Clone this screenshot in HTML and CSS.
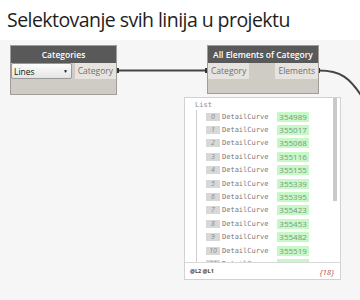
FILE: index.html
```html
<!DOCTYPE html>
<html lang="en">
<head>
    <meta charset="UTF-8">
    <meta name="viewport" content="width=device-width, initial-scale=1.0">
    <title>Selektovanje svih linija</title>

    <link rel="stylesheet" href="styles.css">
</head>
<body>
    <div class="canvas">
        <h1 class="title">Selektovanje svih linija u projektu</h1>

        <svg class="wires" width="360" height="300" viewBox="0 0 360 300">
            <path d="M118 70.5 L206 70.5" stroke="#444" stroke-width="2" fill="none"/>
            <path d="M319 70.5 C340 70.5 350 77 364 100" stroke="#444" stroke-width="2" fill="none"/>
            <rect x="116" y="68" width="3" height="5" fill="#333"/>
            <rect x="205" y="68" width="3" height="5" fill="#333"/>
            <rect x="317" y="68" width="3" height="5" fill="#333"/>
        </svg>

        <div class="node node-categories">
            <div class="node-head">Categories</div>
            <div class="node-row">
                <div class="dropdown">
                    <span>Lines</span>
                    <span class="arrow">&#9660;</span>
                </div>
                <div class="port">Category</div>
            </div>
            <div class="node-foot"></div>
        </div>

        <div class="node node-elements">
            <div class="node-head">All Elements of Category</div>
            <div class="node-row">
                <div class="port">Category</div>
                <div class="port">Elements</div>
            </div>
            <div class="node-foot"></div>
        </div>

        <div class="watch">
            <div class="watch-body">
                <div class="list-label">List</div>
                <div class="tree">
                    <div class="item"><span class="idx">0</span><span class="type">DetailCurve</span><span class="val">354989</span></div>
                    <div class="item"><span class="idx">1</span><span class="type">DetailCurve</span><span class="val">355017</span></div>
                    <div class="item"><span class="idx">2</span><span class="type">DetailCurve</span><span class="val">355068</span></div>
                    <div class="item"><span class="idx">3</span><span class="type">DetailCurve</span><span class="val">355116</span></div>
                    <div class="item"><span class="idx">4</span><span class="type">DetailCurve</span><span class="val">355155</span></div>
                    <div class="item"><span class="idx">5</span><span class="type">DetailCurve</span><span class="val">355339</span></div>
                    <div class="item"><span class="idx">6</span><span class="type">DetailCurve</span><span class="val">355395</span></div>
                    <div class="item"><span class="idx">7</span><span class="type">DetailCurve</span><span class="val">355423</span></div>
                    <div class="item"><span class="idx">8</span><span class="type">DetailCurve</span><span class="val">355453</span></div>
                    <div class="item"><span class="idx">9</span><span class="type">DetailCurve</span><span class="val">355482</span></div>
                    <div class="item"><span class="idx">10</span><span class="type">DetailCurve</span><span class="val">355519</span></div>
                    <div class="item"><span class="idx">11</span><span class="type">DetailCurve</span><span class="val">355540</span></div>
                </div>
                <div class="scrollbar"></div>
            </div>
            <div class="watch-foot">
                <span class="levels">@L2 @L1</span>
                <span class="count">{18}</span>
            </div>
        </div>
    </div>
</body>
</html>
```

FILE: styles.css
```css
*{
    box-sizing: border-box;
}
body{
    margin: 0;
    background-color: #f6f6f6;
    font-family: "Open Sans", "Noto Sans", sans-serif;
}
.canvas{
    position: relative;
    width: 360px;
    height: 300px;
    overflow: hidden;
}
.title{
    margin: 0;
    padding: 6px 0 0 7px;
    height: 40px;
    background-color: #fff;
    font-size: 19.5px;
    font-weight: 400;
    color: #1e1e1e;
    line-height: 28px;
    letter-spacing: -0.55px;
    white-space: nowrap;
}
.wires{
    position: absolute;
    left: 0;
    top: 0;
}

/* nodes */
.node{
    position: absolute;
    top: 45px;
    display: flex;
    flex-direction: column;
    background-color: #cfcbc5;
    border: 1px solid #a09c97;
}
.node-categories{
    left: 10px;
    width: 107px;
    height: 50px;
}
.node-elements{
    left: 207px;
    width: 112px;
    height: 49px;
}
.node-head{
    height: 17px;
    background-color: #595959;
    color: #fff;
    font-size: 8.5px;
    font-weight: 600;
    text-align: center;
    line-height: 17px;
    white-space: nowrap;
}
.node-row{
    display: flex;
    justify-content: space-between;
    height: 16px;
}
.node-foot{
    flex: 1;
}
.dropdown{
    display: flex;
    flex-shrink: 0;
    justify-content: space-between;
    align-items: center;
    width: 61px;
    padding: 0 3px 0 2px;
    background: linear-gradient(#fdfdfd, #e4e4e4);
    border: 1px solid #9a9a9a;
    border-radius: 2px;
    font-size: 8.5px;
    color: #111;
}
.arrow{
    font-size: 5px;
}
.port{
    background-color: #e7e4df;
    color: #6f6f6f;
    font-size: 8.5px;
    line-height: 16px;
    padding: 0 3px;
    white-space: nowrap;
}

/* watch panel */
.watch{
    position: absolute;
    left: 184px;
    top: 97px;
    width: 157px;
    height: 183px;
    display: flex;
    flex-direction: column;
    background-color: #fff;
    border: 1px solid #d2d2d2;
}
.watch-body{
    position: relative;
    flex: 1;
    overflow: hidden;
    padding: 2px 0 0 10px;
    border-bottom: 1px solid #d8d8d8;
}
.list-label{
    font-family: "DejaVu Sans Mono", monospace;
    font-size: 7px;
    color: #8a8a8a;
    height: 10px;
    line-height: 10px;
}
.tree{
    margin-left: 1px;
    padding-left: 9px;
    border-left: 1px solid #cfcfcf;
}
.item{
    display: flex;
    align-items: center;
    height: 13.4px;
}
.idx{
    min-width: 14px;
    height: 8px;
    padding: 0 3px;
    margin-right: 2px;
    background-color: #d8d8d8;
    color: #8c8c8c;
    font-size: 7px;
    font-style: italic;
    line-height: 8px;
    text-align: center;
}
.type{
    font-family: "DejaVu Sans Mono", monospace;
    font-size: 7px;
    color: #7a7a7a;
    margin-right: 9px;
}
.val{
    height: 10px;
    padding: 0 2px;
    background-color: #c8f7c8;
    color: #7a9a7a;
    font-size: 8px;
    line-height: 10px;
}
.scrollbar{
    position: absolute;
    top: 0;
    right: 3px;
    width: 4px;
    height: 103px;
    background-color: #c9c9c9;
}
.watch-foot{
    display: flex;
    justify-content: space-between;
    align-items: center;
    height: 16px;
    padding: 0 6px 0 5px;
}
.levels{
    font-size: 5.5px;
    font-weight: 700;
    color: #444;
}
.count{
    font-size: 8px;
    font-style: italic;
    color: #b05050;
}
```
